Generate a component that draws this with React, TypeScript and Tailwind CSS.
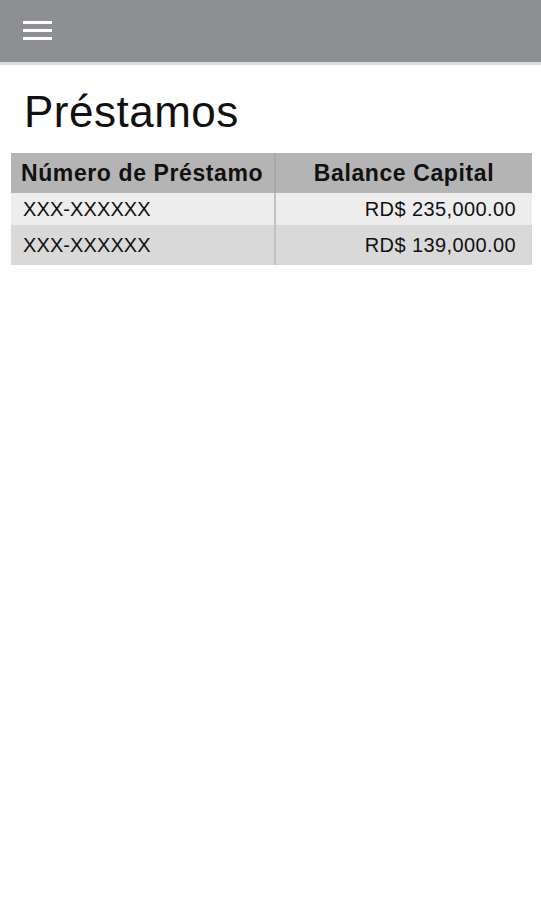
import React from 'react';

const loans = [
  { id: 'XXX-XXXXXX', balance: 'RD$ 235,000.00', bg: 'bg-[#ededed]', h: 'h-[32px]' },
  { id: 'XXX-XXXXXX', balance: 'RD$ 139,000.00', bg: 'bg-[#d9d9d9]', h: 'h-[40px]' },
];

const App: React.FC = () => {
  return (
    <div className="min-h-[900px] bg-white text-[#111] font-['Liberation_Sans',Arial,sans-serif]">
      <header className="h-[62px] bg-[#8e8f93] flex items-center pl-[23px]">
        <button aria-label="Menu" className="flex flex-col gap-[5px] w-[29px] -mt-[1px]">
          <span className="block h-[3px] bg-white" />
          <span className="block h-[3px] bg-white" />
          <span className="block h-[3px] bg-white" />
        </button>
      </header>
      <div className="h-[3px] bg-[#dcdcde]" />

      <h1 className="mt-[25px] ml-[24px] text-[44px] leading-none tracking-[0.5px]">Préstamos</h1>

      <table className="mt-[19px] ml-[11px] w-[521px] border-collapse">
        <thead>
          <tr className="h-[40px] bg-[#b4b4b4]">
            <th className="w-[264px] p-0 pl-[10px] text-left text-[23px] font-bold tracking-[0.6px] whitespace-nowrap">
              Número de Préstamo
            </th>
            <th className="p-0 text-center text-[23px] font-bold tracking-[0.6px] border-l-2 border-[#a8a8a8]">
              Balance Capital
            </th>
          </tr>
        </thead>
        <tbody>
          {loans.map((loan, i) => (
            <tr key={i} className={`${loan.bg} ${loan.h}`}>
              <td className="p-0 pl-[12px] text-[20px] tracking-[0.1px]">{loan.id}</td>
              <td className="p-0 pr-[16px] text-right text-[20px] tracking-[0.4px] border-l-2 border-[#c2c2c2]">
                {loan.balance}
              </td>
            </tr>
          ))}
        </tbody>
      </table>
    </div>
  );
};

export default App;
